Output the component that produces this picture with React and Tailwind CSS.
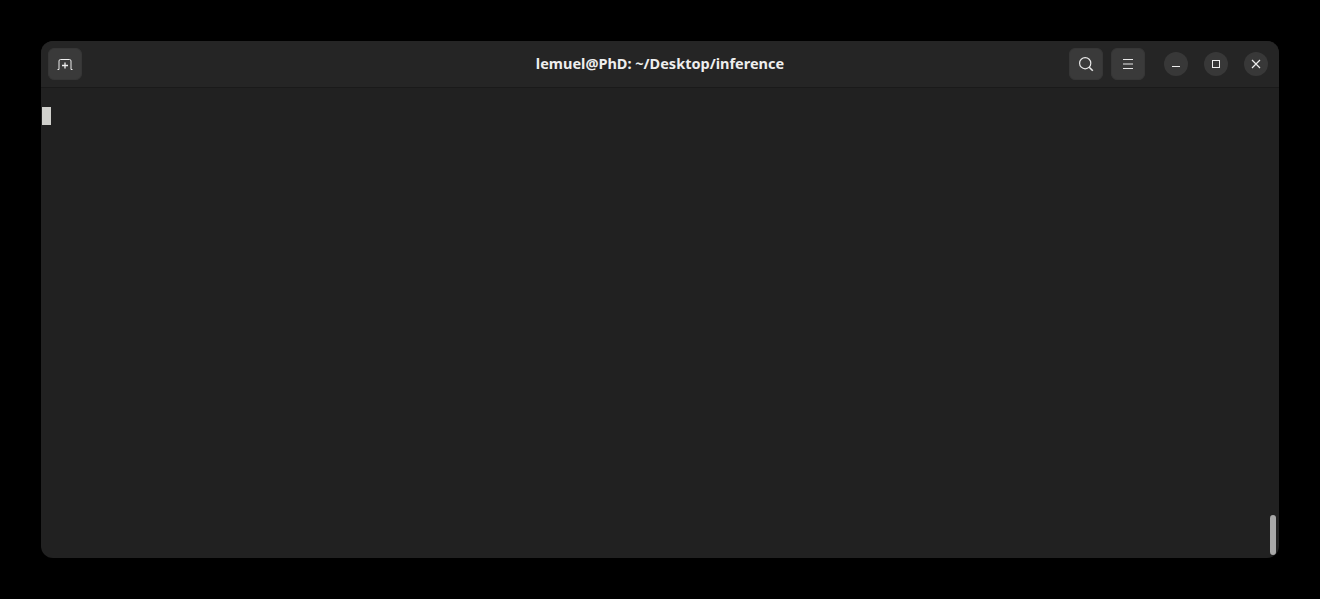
function HeaderButton({ children }) {
  return (
    <button className="flex h-[32px] w-[34px] items-center justify-center rounded-[6px] border border-[#363636] bg-[#3a3a3a]">
      {children}
    </button>
  );
}

function WindowButton({ children }) {
  return (
    <button className="flex h-[24px] w-[24px] items-center justify-center rounded-full bg-[#383838]">
      {children}
    </button>
  );
}

export default function App() {
  return (
    <div className="h-[599px] w-[1320px] overflow-hidden bg-black pl-[41px] pt-[41px]">
      <div className="flex h-[517px] w-[1238px] flex-col overflow-hidden rounded-[12px] bg-[#212121]">
        <header className="grid h-[47px] shrink-0 grid-cols-[1fr_auto_1fr] items-center border-b border-[#1a1a1a] bg-[#252525]">
          <div className="flex pl-[7px]">
            <HeaderButton>
              <svg className="translate-y-px" width="16" height="12" viewBox="0 0 16 12" fill="none" stroke="#eeeeee" strokeWidth="1">
                <path d="M0.5 10.5h1.5V2q0-1.500 1.500-1.500h9q1.500 0 1.500 1.500v8.500h1.500" />
                <path d="M8 3.500v6M5 6.500h6" strokeWidth="1.300" />
              </svg>
            </HeaderButton>
          </div>
          <h1 className="font-['Noto_Sans',sans-serif] text-[14.5px] font-bold text-[#eeeeee]">
            lemuel@PhD: ~/Desktop/inference
          </h1>
          <div className="flex items-center justify-end pr-[11px]">
            <div className="flex gap-[8px]">
              <HeaderButton>
                <svg width="16" height="16" viewBox="0 0 16 16" fill="none" stroke="#e8e8e8" strokeWidth="1.2">
                  <circle cx="7.2" cy="7.2" r="5.6" />
                  <path d="M11.2 11.2l3.6 3.6" strokeWidth="1.6" />
                </svg>
              </HeaderButton>
              <HeaderButton>
                <svg width="12" height="12" viewBox="0 0 12 12" fill="none" stroke="#e8e8e8" strokeWidth="1">
                  <path d="M1 1.5h10M1 6h10M1 10.5h10" />
                </svg>
              </HeaderButton>
            </div>
            <div className="ml-[19px] flex gap-[16px]">
              <WindowButton>
                <svg width="10" height="10" viewBox="0 0 10 10" fill="none" stroke="#eeeeee" strokeWidth="1">
                  <path d="M1 7.500h8" />
                </svg>
              </WindowButton>
              <WindowButton>
                <svg width="10" height="10" viewBox="0 0 10 10" fill="none" stroke="#eeeeee" strokeWidth="1">
                  <rect x="1.500" y="1.500" width="7" height="7" />
                </svg>
              </WindowButton>
              <WindowButton>
                <svg width="10" height="10" viewBox="0 0 10 10" fill="none" stroke="#eeeeee" strokeWidth="1.2">
                  <path d="M1 1l8 8M9 1l-8 8" />
                </svg>
              </WindowButton>
            </div>
          </div>
        </header>
        <main className="relative flex-1 pl-px pt-[19px]">
          <div className="h-[18px] w-[9px] bg-[#d0d0cc]" />
          <div className="absolute bottom-[3px] right-[3px] h-[40px] w-[6px] rounded-full bg-[#a8a8a8]" />
        </main>
      </div>
    </div>
  );
}
